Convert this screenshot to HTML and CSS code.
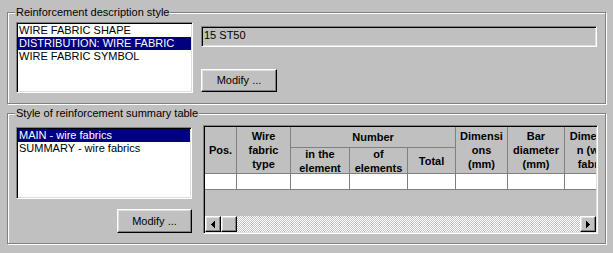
FILE: index.html
```html
<!DOCTYPE html>
<html>
<head>
<meta charset="utf-8">
<link rel="stylesheet" href="styles.css">
</head>
<body>
<div class="dialog">
  <fieldset class="group group-desc">
    <legend>Reinforcement description style</legend>
    <div class="list list-desc">
      <div class="item">WIRE FABRIC SHAPE</div>
      <div class="item selected">DISTRIBUTION: WIRE FABRIC</div>
      <div class="item">WIRE FABRIC SYMBOL</div>
    </div>
    <div class="desc-side">
      <div class="field">15 ST50</div>
      <button class="btn btn-desc">Modify ...</button>
    </div>
  </fieldset>
  <fieldset class="group group-table">
    <legend>Style of reinforcement summary table</legend>
    <div class="table-side">
      <div class="list list-table">
        <div class="item selected">MAIN - wire fabrics</div>
        <div class="item">SUMMARY - wire fabrics</div>
      </div>
      <button class="btn btn-table">Modify ...</button>
    </div>
    <div class="grid-box">
      <div class="grid-clip">
        <div class="grid">
          <div class="gh span2">Pos.</div>
          <div class="gh span2">Wire<br>fabric<br>type</div>
          <div class="gh span3">Number</div>
          <div class="gh span2">Dimensi<br>ons<br>(mm)</div>
          <div class="gh span2">Bar<br>diameter<br>(mm)</div>
          <div class="gh span2">Dimensio<br>n (wire<br>fabric)</div>
          <div class="gh">in the<br>element</div>
          <div class="gh">of<br>elements</div>
          <div class="gh">Total</div>
          <div class="gd"></div>
          <div class="gd"></div>
          <div class="gd"></div>
          <div class="gd"></div>
          <div class="gd"></div>
          <div class="gd"></div>
          <div class="gd"></div>
          <div class="gd"></div>
        </div>
      </div>
      <div class="hscroll">
        <div class="raised sb-btn">
          <svg width="4" height="7" viewBox="0 0 4 7" shape-rendering="crispEdges"><path d="M0 3h1v1H0z M1 2h1v3H1z M2 1h1v5H2z M3 0h1v7H3z" fill="#000"/></svg>
        </div>
        <div class="raised sb-thumb"></div>
        <div class="sb-track"></div>
        <div class="raised sb-btn">
          <svg width="4" height="7" viewBox="0 0 4 7" shape-rendering="crispEdges"><path d="M3 3h1v1H3z M2 2h1v3H2z M1 1h1v5H1z M0 0h1v7H0z" fill="#000"/></svg>
        </div>
      </div>
    </div>
  </fieldset>
</div>
</body>
</html>
```

FILE: styles.css
```css
* { box-sizing: border-box; }
html, body { margin: 0; padding: 0; }
body {
  background: #c0c0c0;
  font-family: "Liberation Sans", Arial, sans-serif;
  font-size: 11px;
  line-height: 13px;
  color: #000;
  width: 613px;
  height: 253px;
  overflow: hidden;
}
.dialog { padding: 6px 7px 0 7px; }

.group {
  margin: 0;
  min-width: 0;
  border: 1px solid #808080;
  box-shadow: inset 1px 1px #fff, 1px 1px #fff;
  display: flex;
  align-items: flex-start;
}
.group legend {
  padding: 0 1px;
  margin-left: -1px;
  background: #c0c0c0;
  font-size: 11px;
  line-height: 13px;
}
.group-desc { padding: 3px 8px 10px 8px; gap: 8px; }
.group-table { margin-top: 3px; padding: 5px 7px 9px 8px; gap: 11px; }

.sunken {
  border: 1px solid;
}
.list {
  background: #fff;
  border: 1px solid;
  border-color: #808080 #fff #fff #808080;
  box-shadow: inset 1px 1px #000, inset -1px -1px #dfdfdf;
  padding: 1px;
}
.list-desc { width: 177px; height: 71px; }
.list-table { width: 176px; height: 72px; margin-top: 2px; }
.item { padding-left: 1px; height: 13px; white-space: nowrap; }
.item.selected { background: #000080; color: #fff; }

.desc-side { flex: 1; display: flex; flex-direction: column; align-items: flex-start; }
.field {
  width: 100%;
  height: 21px;
  margin-top: 4px;
  border: 1px solid;
  border-color: #808080 #fff #fff #808080;
  box-shadow: inset 1px 1px #000, inset -1px -1px #dfdfdf;
  padding: 2px 2px 0 2px;
}

.btn, .raised {
  background: #c0c0c0;
  border: 1px solid;
  border-color: #fff #000 #000 #fff;
  box-shadow: inset -1px -1px #808080, inset 1px 1px #dfdfdf;
}
.btn {
  font: inherit;
  color: #000;
  padding: 0;
  width: 75px;
  height: 23px;
}
.btn-desc { margin-top: 22px; width: 76px; }
.table-side { width: 176px; display: flex; flex-direction: column; align-items: flex-end; }
.btn-table { margin-top: 10px; height: 24px; }

.grid-box {
  width: 395px;
  height: 109px;
  border: 1px solid;
  border-color: #808080 #fff #fff #808080;
  box-shadow: inset 1px 1px #000, inset -1px -1px #dfdfdf;
  padding: 1px;
  display: flex;
  flex-direction: column;
}
.grid-clip { height: 89px; overflow: hidden; }
.grid {
  display: grid;
  grid-template-columns: 32px 54px 59px 58px 48px 52px 57px 60px;
  grid-template-rows: 21px 26px 16px;
  width: max-content;
}
.gh, .gd {
  border-right: 1px solid #808080;
  border-bottom: 1px solid #808080;
}
.gh {
  display: flex;
  align-items: center;
  justify-content: center;
  text-align: center;
  font-weight: bold;
  line-height: 14px;
  white-space: nowrap;
}
.gd { background: #fff; }
.span2 { grid-row: span 2; }
.span3 { grid-column: span 3; }

.hscroll { display: flex; height: 16px; }
.sb-btn {
  width: 16px;
  height: 16px;
  display: flex;
  align-items: center;
  justify-content: center;
}
.sb-btn svg { display: block; }
.sb-thumb { width: 16px; height: 16px; }
.sb-track {
  flex: 1;
  background: repeating-conic-gradient(#fff 0 25%, #c0c0c0 0 50%) 0 0 / 2px 2px;
}
```
